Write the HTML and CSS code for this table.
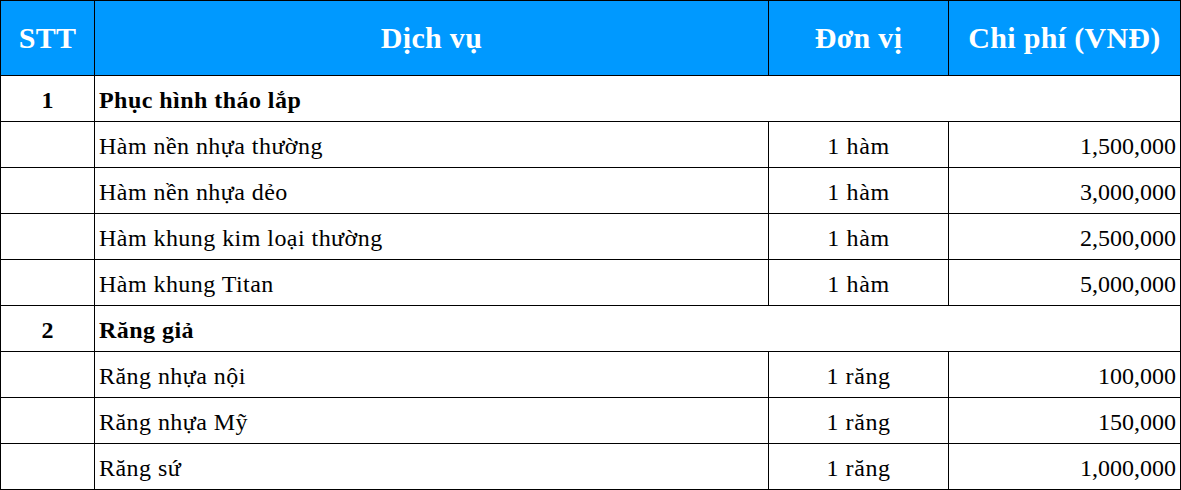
FILE: index.html
```html
<!DOCTYPE html>
<html lang="vi">
<head>
<meta charset="utf-8">
<link rel="stylesheet" href="styles.css">
</head>
<body>
<table class="price">
  <colgroup>
    <col class="c-stt">
    <col class="c-svc">
    <col class="c-unit">
    <col class="c-cost">
  </colgroup>
  <thead>
    <tr class="head">
      <th>STT</th>
      <th>Dịch vụ</th>
      <th>Đơn vị</th>
      <th>Chi phí (VNĐ)</th>
    </tr>
  </thead>
  <tbody>
    <tr class="group">
      <td class="stt">1</td>
      <td class="gname" colspan="3">Phục hình tháo lắp</td>
    </tr>
    <tr><td></td><td class="svc">Hàm nền nhựa thường</td><td class="unit">1 hàm</td><td class="cost">1,500,000</td></tr>
    <tr><td></td><td class="svc">Hàm nền nhựa dẻo</td><td class="unit">1 hàm</td><td class="cost">3,000,000</td></tr>
    <tr><td></td><td class="svc">Hàm khung kim loại thường</td><td class="unit">1 hàm</td><td class="cost">2,500,000</td></tr>
    <tr><td></td><td class="svc">Hàm khung Titan</td><td class="unit">1 hàm</td><td class="cost">5,000,000</td></tr>
    <tr class="group">
      <td class="stt">2</td>
      <td class="gname" colspan="3">Răng giả</td>
    </tr>
    <tr><td></td><td class="svc">Răng nhựa nội</td><td class="unit">1 răng</td><td class="cost">100,000</td></tr>
    <tr><td></td><td class="svc">Răng nhựa Mỹ</td><td class="unit">1 răng</td><td class="cost">150,000</td></tr>
    <tr><td></td><td class="svc">Răng sứ</td><td class="unit">1 răng</td><td class="cost">1,000,000</td></tr>
  </tbody>
</table>
</body>
</html>
```
FILE: styles.css
```css
html, body {
  margin: 0;
  padding: 0;
  background: #ffffff;
}

.price {
  border-collapse: collapse;
  table-layout: fixed;
  width: 1180px;
  font-family: "Liberation Serif", "Times New Roman", serif;
  font-size: 24px;
  color: #000000;
}

.c-stt { width: 94px; }
.c-svc { width: 674px; }
.c-unit { width: 180px; }
.c-cost { width: 232px; }

.price th,
.price td {
  border: 1px solid #000000;
  padding: 0 4px;
  vertical-align: middle;
  white-space: nowrap;
  overflow: hidden;
}

.head th {
  height: 74px;
  background: #0099ff;
  color: #ffffff;
  font-weight: bold;
  font-size: 30px;
  letter-spacing: 0.3px;
  text-align: center;
  padding: 0;
}

.price tbody td {
  height: 41px;
  padding-top: 4px;
  padding-bottom: 0;
}

.stt {
  text-align: center;
  font-weight: bold;
}

.gname {
  font-weight: bold;
  text-align: left;
  letter-spacing: 0.45px;
}

.svc {
  text-align: left;
  letter-spacing: 0.45px;
}

.unit {
  text-align: center;
  letter-spacing: 0.6px;
}

.cost {
  text-align: right;
  padding-right: 3px;
}
```
